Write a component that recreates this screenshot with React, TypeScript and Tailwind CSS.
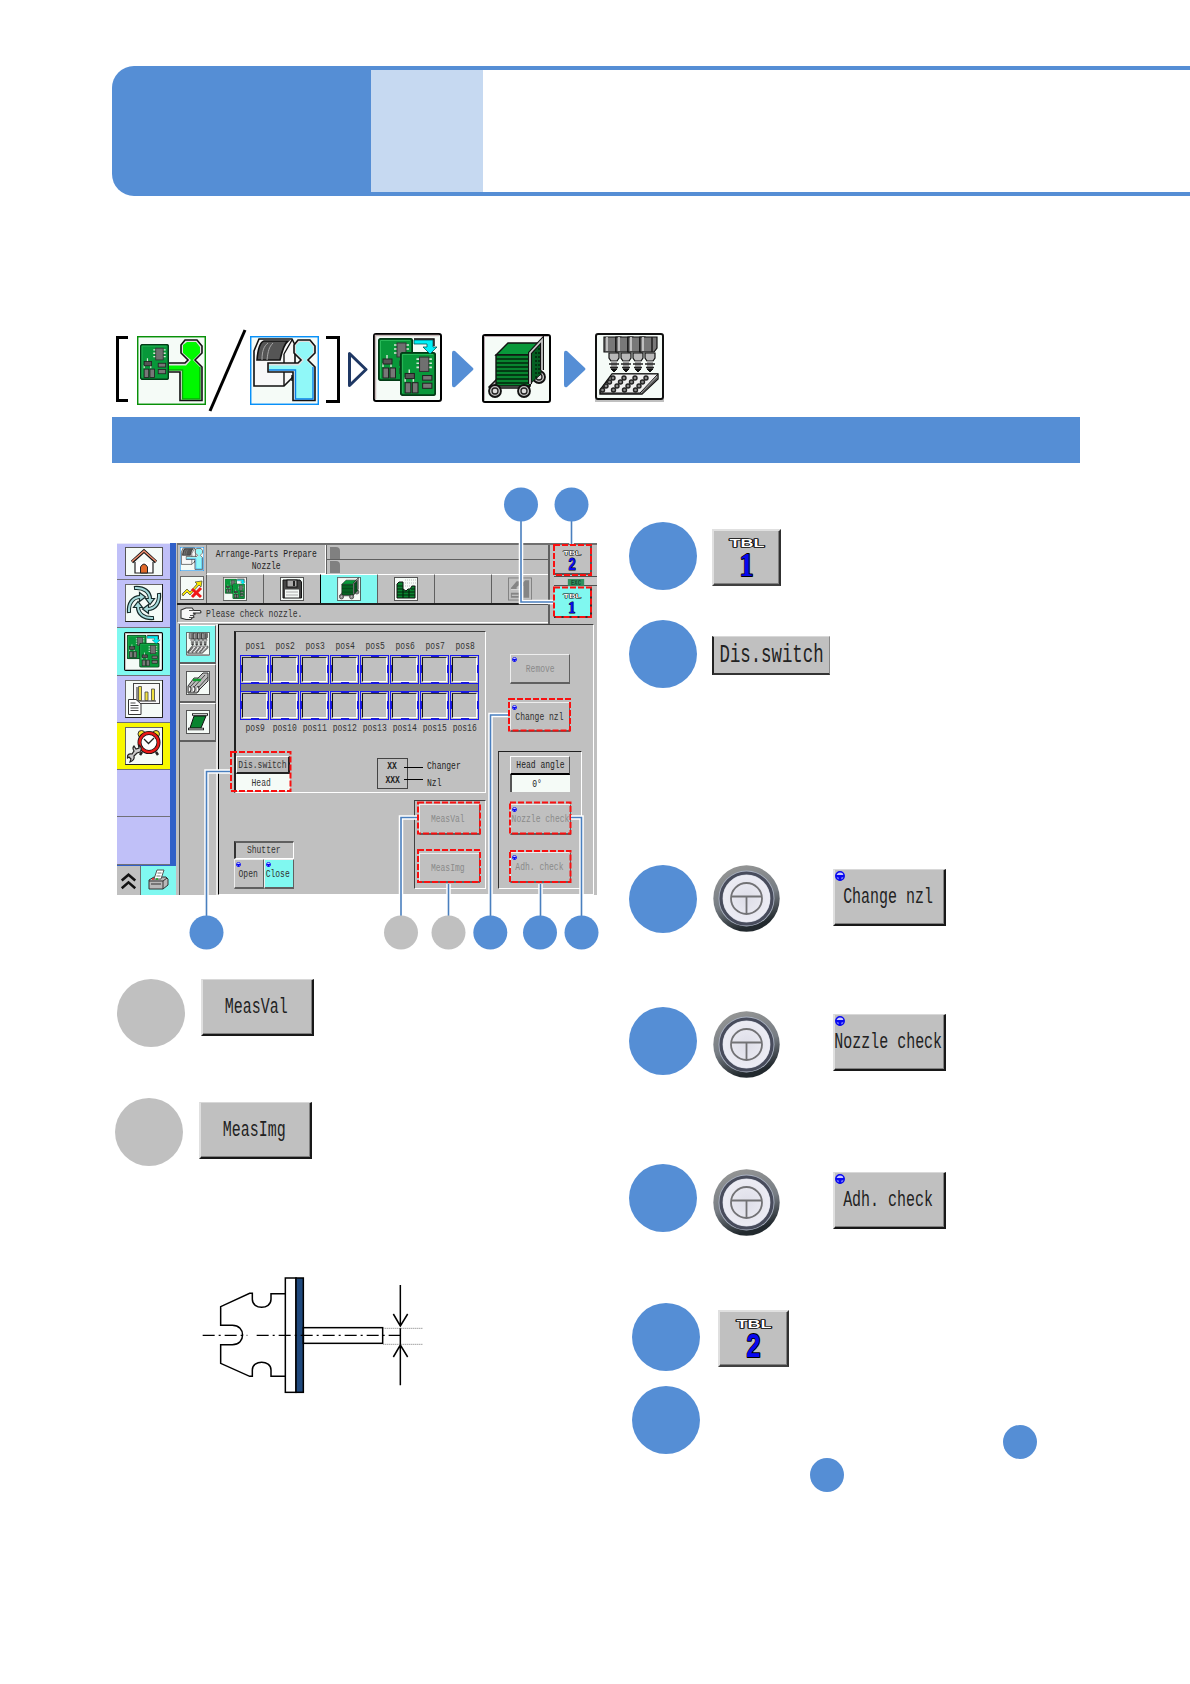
import React from "react";
import clsx from "clsx";

type IconProps = {
  className?: string;
};

/* ---------- text in the machine's narrow terminal face ---------- */

type TermProps = {
  children: React.ReactNode;
  className?: string;
};

const Term = ({ children, className }: TermProps) => (
  <span
    className={clsx(
      "inline-block translate-y-px scale-x-[0.68] whitespace-pre font-['Liberation_Mono',monospace] leading-none",
      className,
    )}
  >
    {children}
  </span>
);

/* ---------- icons ---------- */

const Board = ({ x, y, w = 35, h = 43 }: { x: number; y: number; w?: number; h?: number }) => (
  <svg x={x} y={y} width={w} height={h} viewBox="0 0 35 43" preserveAspectRatio="none">
    <rect x="0.8" y="0.8" width="33.4" height="41.4" rx="2" fill="#08983a" stroke="#033b16" strokeWidth="1.8" />
    <path d="M2.5 40V2.5H32" fill="none" stroke="#28b858" />
    <path d="M16 7h15M16 11h15M16 15h15" stroke="#d8e8d8" strokeWidth="1.6" />
    <rect x="19" y="5" width="9" height="14" fill="#707070" stroke="#333" />
    <path d="M9 17v6M5 25v4M13 25v4" stroke="#d8e8d8" strokeWidth="1.4" />
    <rect x="5" y="21" width="9" height="5" fill="#555" stroke="#222" />
    <rect x="5" y="30" width="5.5" height="10" fill="#777" stroke="#222" />
    <rect x="12" y="30" width="5.5" height="10" fill="#777" stroke="#222" />
    <rect x="22" y="23" width="9" height="4.5" fill="#777" stroke="#222" />
    <rect x="22" y="30.5" width="9" height="5" fill="#777" stroke="#222" />
  </svg>
);

const Person = ({ fill, shade, arm }: { fill: string; shade: string; arm: number }) => (
  <g>
    <path
      d={`M48 4H60L65 10V17L58 24L65 31V64.5H43V36H${arm}V27H48L51 24L44 17V9Z`}
      fill="#e0e0e0"
      stroke="#111"
      strokeWidth="1.6"
    />
    <path
      d={`M50 6H59L63 11V17L56 24L63 31V63H45.5V34H${arm + 1}V29.5H49L54 24L46 17V9Z`}
      fill={fill}
    />
    <path d={`M${arm + 1} 34H45.5V63H63V31`} fill="none" stroke={shade} strokeWidth="1.4" />
  </g>
);

const OperatorBoardIcon = ({ className }: IconProps) => (
  <svg className={className} viewBox="0 0 69 69">
    <rect x="0.7" y="0.7" width="67.6" height="67.6" fill="#f5fbf7" stroke="#089008" strokeWidth="1.5" />
    <Person fill="#00f800" shade="#08a808" arm={31} />
    <Board x={3} y={8} w={29} h={36} />
  </svg>
);

const OperatorMachineIcon = ({ className }: IconProps) => (
  <svg className={className} viewBox="0 0 69 69">
    <rect x="0.7" y="0.7" width="67.6" height="67.6" fill="#f5fbf7" stroke="#0890f8" strokeWidth="1.5" />
    <path d="M4 15 9 3H42L45 9V39L34 50H4Z" fill="#f8f8f8" stroke="#111" strokeWidth="1.6" />
    <path d="M34 50V18M34 18 42 4M42 45V39" fill="none" stroke="#111" strokeWidth="1.4" />
    <path d="M7 24C8 12 10 6 14 5H38C34 8 32 15 30 24Z" fill="#555" stroke="#111" strokeWidth="1.6" />
    <path d="M12 24C12 15 14 10 18 7M17 24C18 15 19 11 23 7" fill="none" stroke="#aaa" />
    <Person fill="#90f8f8" shade="#0880e8" arm={18} />
  </svg>
);

const BoardsIcon = ({ className }: IconProps) => (
  <svg className={className} viewBox="0 0 69 69">
    <rect x="1" y="1" width="67" height="67" rx="2" fill="#f5fbf7" stroke="#000" strokeWidth="2" />
    <path d="M2.5 66V2.5H66" fill="none" stroke="#c8b8b8" strokeWidth="1.5" />
    <Board x={5} y={5} />
    <Board x={27} y={19} w={36} h={44} />
    <path d="M41 7H60V14H64L57 21L50 14H54V11H41Z" fill="#00f0f8" stroke="#055" strokeWidth="0.8" />
    <path d="M41 6H61V13" fill="none" stroke="#000" strokeWidth="1.4" />
  </svg>
);

const Wheel = ({ x, y }: { x: number; y: number }) => (
  <g>
    <circle cx={x} cy={y} r="6" fill="#c0c0c0" stroke="#111" strokeWidth="1.8" />
    <circle cx={x} cy={y} r="3" fill="#ddd" stroke="#222" strokeWidth="1.3" />
  </g>
);

const CartIcon = ({ className }: IconProps) => (
  <svg className={className} viewBox="0 0 69 69">
    <rect x="1" y="1" width="67" height="67" rx="2" fill="#f5fbf7" stroke="#000" strokeWidth="2" />
    <path d="M2.5 66V2.5H66" fill="none" stroke="#b8a8b0" />
    <Wheel x={57} y={43} />
    <path d="M7 53 14 46H50L47 54H8Z" fill="#c0c0c0" stroke="#111" strokeWidth="1.5" />
    <path d="M14 21 26 9H59L47 21Z" fill="#08983a" stroke="#111" strokeWidth="1.4" />
    <path d="M47 21 59 9V40L47 51Z" fill="#045f22" stroke="#111" />
    <rect x="14" y="21" width="34" height="31" fill="#08842f" stroke="#111" strokeWidth="1.4" />
    <path d="M14 25H48M14 29H48M14 33H48M14 37H48M14 41H48M14 45H48M14 49H48" stroke="#02250c" strokeWidth="1.7" />
    <path d="M54 18V46M57 14V42" stroke="#02250c" strokeWidth="1.5" strokeDasharray="2 2" />
    <path d="M48 50V19L60 6V36" fill="none" stroke="#111" strokeWidth="4" />
    <path d="M48 50V19L60 6V36" fill="none" stroke="#c8c8c8" strokeWidth="1.8" />
    <Wheel x={13} y={57} />
    <Wheel x={42} y={57} />
  </svg>
);

const NozzleTrayIcon = ({ className }: IconProps) => (
  <svg className={className} viewBox="0 0 69 69">
    <rect x="0" y="66" width="69" height="3" fill="#c0c0c0" />
    <rect x="1" y="1" width="67" height="65" rx="2" fill="#f5fbf7" stroke="#111" strokeWidth="2" />
    {[9, 21, 33, 45].map((x) => (
      <g key={x}>
        <path d={`M${x} 4V19H${x + 14}L${x + 17} 15V4Z`} fill="#787878" stroke="#111" strokeWidth="1.2" />
        <path d={`M${x + 3} 4V18`} stroke="#c8c8c8" strokeWidth="1.8" />
        <path d={`M${x + 12} 4V19`} stroke="#222" strokeWidth="1.6" />
        <path
          d={`M${x + 5} 20H${x + 15}V25L${x + 13} 28H${x + 7}L${x + 5} 25Z`}
          fill="#b8b8b8"
          stroke="#111"
          strokeWidth="1.2"
        />
        <path d={`M${x + 7} 28H${x + 13}V36H${x + 7}Z`} fill="#a0a0a0" />
        <path d={`M${x + 5} 31H${x + 15}M${x + 6} 34.5H${x + 14}`} stroke="#222" strokeWidth="1.6" />
        <path d={`M${x + 7} 36H${x + 13}L${x + 10} 39Z`} fill="#111" stroke="#111" />
      </g>
    ))}
    <path d="M17 41H63V46L47 61H5V57Z" fill="#b8b8b8" stroke="#111" strokeWidth="1.4" />
    <path d="M17 41H63L45 60H5Z" fill="#f0f0f0" stroke="#111" />
    <path d="M47 60 63 44" stroke="#555" strokeWidth="1.5" />
    {[0, 1, 2, 3].map((row) =>
      [0, 1, 2, 3].map((col) => (
        <circle
          key={`${row}-${col}`}
          cx={18 - row * 3.5 + col * 11}
          cy={45 + row * 4}
          r="2"
          fill="#888"
          stroke="#222"
          strokeWidth="1.4"
        />
      )),
    )}
  </svg>
);

const Frame = ({ children }: { children?: React.ReactNode }) => (
  <>
    <rect x="0.5" y="0.5" width="37" height="37" fill="#f5fbf7" stroke="#666" />
    <path d="M0.5 38V37.5H37.5V0" fill="none" stroke="#222" />
    {children}
  </>
);

const HomeIcon = ({ className }: IconProps) => (
  <svg className={className} viewBox="0 0 38 29">
    <rect x="0.5" y="0.5" width="37" height="28" fill="#f5fbf7" stroke="#555" />
    <path d="M10 15V26H28V15" fill="#fff" stroke="#222" strokeWidth="1.2" />
    <path d="M7 15 19 4 31 15" fill="none" stroke="#111" strokeWidth="3.2" />
    <path d="M7 14.5 19 4 31 14.5" fill="none" stroke="#f09070" strokeWidth="1.4" />
    <path d="M15.5 26V20Q19 14 22.5 20V26Z" fill="#e06828" stroke="#222" />
  </svg>
);

const CycleIcon = ({ className }: IconProps) => (
  <svg className={className} viewBox="0 0 38 38">
    <Frame>
      {[0, 90, 180, 270].map((angle) => (
        <g key={angle} transform={`rotate(${angle} 19 19)`}>
          <path d="M9 4C19 3 25 8 25 15" fill="none" stroke="#152a2a" strokeWidth="4.2" />
          <path d="M20.5 14.5H29.5L25 20.5Z" fill="#a8dcdc" stroke="#152a2a" strokeWidth="1.2" />
          <path d="M10 4C19 3.500 25 8 25 16" fill="none" stroke="#a8dcdc" strokeWidth="2" />
        </g>
      ))}
    </Frame>
  </svg>
);

const ReportIcon = ({ className }: IconProps) => (
  <svg className={className} viewBox="0 0 38 38">
    <Frame>
      <rect x="8.5" y="3.5" width="26" height="20" fill="#f8f8f8" stroke="#444" />
      <path d="M12 7V21H31" fill="none" stroke="#222" />
      <path d="M13.5 6.500h3v14h-3zM20 12h3v8.5h-3zM26.5 9h3v11.5h-3z" fill="#f0e040" stroke="#444" strokeWidth="0.8" />
      <path d="M3.5 19.5H11L16 24V34.5H3.5Z" fill="#fff" stroke="#333" />
      <path d="M5.5 23h5M5.5 25.5h8M5.5 28h8M5.5 30.5h8" stroke="#333" strokeWidth="0.9" />
    </Frame>
  </svg>
);

const AlarmIcon = ({ className }: IconProps) => (
  <svg className={className} viewBox="0 0 38 38">
    <Frame>
      <path d="M17 25 15 28M31 25 33 28" stroke="#222" strokeWidth="2.5" />
      <circle cx="16.5" cy="7" r="3.5" fill="#f8e020" stroke="#333" />
      <circle cx="31" cy="7" r="3.5" fill="#f8e020" stroke="#333" />
      <circle cx="24" cy="15.5" r="9.5" fill="#fff" stroke="#111" strokeWidth="4" />
      <circle cx="24" cy="15.5" r="9.5" fill="none" stroke="#e81818" strokeWidth="2.4" />
      <path d="M19 12 23.5 16.5 29 11" fill="none" stroke="#222" strokeWidth="1.3" />
      <path
        d="M9 19 11 22 14 21 14 18Q18 21 15 25L12 26 9 29Q10 33 5 35L6 32 4 30 2.5 31Q2 26 7 27L9 24Q7 21 9 19Z"
        fill="#ccc"
        stroke="#222"
        strokeWidth="1.2"
      />
    </Frame>
  </svg>
);

const ChevronsIcon = ({ className }: IconProps) => (
  <svg className={className} viewBox="0 0 18 20" fill="none" stroke="#111" strokeWidth="2.8">
    <path d="M1.5 9.5 9 3 16.5 9.5M1.5 18 9 11.5 16.5 18" />
  </svg>
);

const PrinterIcon = ({ className }: IconProps) => (
  <svg className={className} viewBox="0 0 22 22">
    <path d="M2 11 7 8H19L21 10V16L16 20H2Z" fill="#b8b8b8" stroke="#333" />
    <path d="M2 12H16L20 9M16 12V20M4 15H14" fill="none" stroke="#333" />
    <path d="M7 10 10 1H17L14 10Z" fill="#fff" stroke="#555" />
    <path d="M10.5 4H14.5M9.5 7H13.5" stroke="#777" />
    <path d="M5 10H7" stroke="#e02020" strokeWidth="1.5" />
    <path d="M9 10H11" stroke="#10b020" strokeWidth="1.5" />
  </svg>
);

const TrendErrorIcon = ({ className }: IconProps) => (
  <svg className={className} viewBox="0 0 24 24">
    <rect x="0.5" y="0.5" width="23" height="23" fill="#f5fbf7" stroke="#666" />
    <path d="M2 18 7 13 10 16 17 8 15 6 22 5 21 11 19 9 10 19 7 16 3 20Z" fill="#f8e800" stroke="#554" strokeWidth="0.8" />
    <path d="M12 13 21 21M21 12 12 21" stroke="#f01818" strokeWidth="3" />
  </svg>
);

const FloppyIcon = ({ className }: IconProps) => (
  <svg className={className} viewBox="0 0 24 24">
    <rect x="0.5" y="0.5" width="23" height="23" fill="#f5fbf7" stroke="#555" />
    <path d="M3 3H20L21.5 5V21H3Z" fill="#444" stroke="#111" />
    <rect x="7" y="3" width="10" height="7" fill="#aaa" stroke="#111" />
    <path d="M14 4V9" stroke="#222" strokeWidth="2" />
    <rect x="5" y="12.5" width="14" height="8" fill="#f5fbf7" />
    <path d="M6 15H18M6 18H18" stroke="#aaa" />
  </svg>
);

const StacksIcon = ({ className }: IconProps) => (
  <svg className={className} viewBox="0 0 24 24">
    <rect x="0.5" y="0.5" width="23" height="23" fill="#f5fbf7" stroke="#555" />
    <path d="M11 3H22M11 6H22M11 9H22" stroke="#bbb" strokeDasharray="1 1" />
    <path d="M3 7 5 5H9V12L12 14 14 12H16L18 9H21V21H3Z" fill="#08842f" stroke="#111" />
    <path d="M3 9H9M3 12H9M3 15H21M3 18H21M17 12H21M9 12V21M15 13V21" stroke="#02250c" strokeWidth="1.2" />
  </svg>
);

const DisabledStepIcon = ({ className }: IconProps) => (
  <svg className={className} viewBox="0 0 25 24">
    <rect x="0.5" y="0.5" width="24" height="23" fill="none" stroke="#808080" />
    <path d="M3 11 9 4H13V7L9 10V13H3ZM3 16H12V21H3ZM15 6 18 3H22V21H16V9H14Z" fill="#858585" />
    <path d="M3 12.5H13M4 18.5H11" stroke="#d8d8d8" />
  </svg>
);

const HandIcon = ({ className }: IconProps) => (
  <svg className={className} viewBox="0 0 22 14">
    <path
      d="M1 3 6 1H12L14 3.5H20Q22 5 20 6H13L15 7 13 8.5 14 10 12 11 11 12.5H6L1 11Z"
      fill="#f8f8f8"
      stroke="#333"
      strokeWidth="1.1"
    />
    <path d="M9 3.5H14M10 8.5H13M9 10.5H12" stroke="#555" />
  </svg>
);

const FeederIcon = ({ className }: IconProps) => (
  <svg className={className} viewBox="0 0 24 24">
    <rect x="0.5" y="0.5" width="23" height="23" fill="#f5fbf7" stroke="#555" />
    <path d="M2 15 8 7H12L17 2H22V10L13 19 11 22H2Z" fill="#bbb" stroke="#333" />
    <path d="M5 15 15 4M9 15 19 4M12 17 22 6" stroke="#444" />
    <path d="M7 9H15" stroke="#10a030" strokeWidth="2.4" />
    <path d="M3 16Q5 14 5 18T3 21M7 16Q9 14 9 18T7 21M11 16Q13 14 13 18T11 21" fill="#fff" stroke="#222" />
  </svg>
);

const SheetRollIcon = ({ className }: IconProps) => (
  <svg className={className} viewBox="0 0 24 24">
    <rect x="0.5" y="0.5" width="23" height="23" fill="#f5fbf7" stroke="#555" />
    <path d="M8 6H20L15 18H4Z" fill="#08842f" stroke="#111" />
    <path d="M6 4.5H22M2 19H18" stroke="#222" strokeWidth="2.4" />
    <path d="M7 4.5H21M3 19H17" stroke="#ddd" strokeWidth="0.9" />
  </svg>
);

// small steering-wheel mark in the corner of two-hand buttons
const WheelMark = ({ className }: IconProps) => (
  <svg className={className} viewBox="0 0 10 10">
    <circle cx="5" cy="5" r="4.2" fill="#c8c8ff" stroke="#0808f0" strokeWidth="1.5" />
    <path d="M0.5 4H9.5L8.5 6.5H6.5V9.5H3.5V6.5H1.5Z" fill="#0808f0" />
  </svg>
);

const KnobIcon = ({ className }: IconProps) => (
  <svg className={className} viewBox="0 0 67 67">
    <defs>
      <linearGradient id="rim" x1="0" y1="0" x2="0.3" y2="1">
        <stop offset="0" stopColor="#9a9a98" />
        <stop offset="0.6" stopColor="#777d84" />
        <stop offset="1" stopColor="#22292e" />
      </linearGradient>
      <radialGradient id="face">
        <stop offset="0" stopColor="#dedee8" />
        <stop offset="1" stopColor="#ececf4" />
      </radialGradient>
    </defs>
    <circle cx="33.5" cy="33.5" r="33.2" fill="url(#rim)" />
    <circle cx="33.5" cy="33.5" r="28" fill="#aab2c2" />
    <circle cx="33.5" cy="33.5" r="25.500" fill="#d0d4e0" stroke="#484c5c" strokeWidth="3.2" />
    <circle cx="33.5" cy="33.5" r="23.5" fill="url(#face)" />
    <g fill="none" stroke="#727275" strokeWidth="1.8">
      <circle cx="33.5" cy="33.5" r="15.5" />
      <path d="M18 31.5H49M33.5 31.5V49" />
    </g>
  </svg>
);

const TblFace = ({ num, className }: { num: 1 | 2; className?: string }) => (
  <svg className={className} viewBox="0 0 69 58">
    <g stroke="#000" paintOrder="stroke" textAnchor="middle" strokeLinejoin="round">
      <text
        x="35"
        y="18.5"
        fontFamily="Liberation Sans, sans-serif"
        fontWeight="700"
        fontSize="11.5"
        textLength="35"
        lengthAdjust="spacingAndGlyphs"
        fill="#fff"
        strokeWidth="1.6"
      >
        TBL
      </text>
      <text
        x="34.5"
        y="47.5"
        fontFamily={num === 1 ? "Liberation Serif, serif" : "Liberation Sans, sans-serif"}
        fontWeight="700"
        fontSize="33"
        textLength="14"
        lengthAdjust="spacingAndGlyphs"
        fill="#0808f0"
        strokeWidth="2"
      >
        {num}
      </text>
    </g>
  </svg>
);

/* ---------- machine screen ---------- */

type ScreenButtonProps = {
  label: string;
  mark?: boolean;
  muted?: boolean;
  className?: string;
};

const ScreenButton = ({ label, mark, muted, className }: ScreenButtonProps) => (
  <div
    className={clsx(
      "relative flex items-center justify-center border-t border-l border-r border-b-2 border-t-[#eeeeee] border-l-[#eeeeee] border-r-[#606060] border-b-[#606060]",
      className,
    )}
  >
    {mark && <WheelMark className="absolute top-0.5 left-px size-[5px]" />}
    <Term className={clsx("text-[11.8px]", muted ? "text-[#8a8a8a]" : "text-[#303030]")}>{label}</Term>
  </div>
);

const sideItems = [
  { id: "home", h: "h-[36px]", bg: "bg-[#c0c0f8]", icon: <HomeIcon className="h-[29px] w-[38px]" /> },
  { id: "cycle", h: "h-[47.5px]", bg: "bg-[#c0c0f8]", icon: <CycleIcon className="size-[38px]" /> },
  { id: "boards", h: "h-[48px]", bg: "bg-[#80f8f0]", icon: <BoardsIcon className="size-[39px]" /> },
  { id: "report", h: "h-[47px]", bg: "bg-[#c0c0f8]", icon: <ReportIcon className="size-[38px]" /> },
  { id: "alarm", h: "h-[47px]", bg: "bg-[#f8f800]", icon: <AlarmIcon className="size-[38px]" /> },
  { id: "empty-1", h: "h-[47.5px]", bg: "bg-[#c0c0f8]", icon: null },
  { id: "empty-2", h: "h-[47.5px]", bg: "bg-[#c0c0f8]", icon: null },
];

const Sidebar = () => (
  <div className="flex w-[60px] flex-col">
    <div className="flex">
      <div className="w-[53px] border-t border-[#e8e8f8]">
        {sideItems.map((item) => (
          <div
            key={item.id}
            className={clsx(
              "flex items-center justify-center border-b-[1.5px] border-[#707078]",
              item.h,
              item.bg,
            )}
          >
            {item.icon}
          </div>
        ))}
      </div>
      <div className="w-[6px] bg-[#3060c8]" />
      <div className="w-px bg-[#c0c0c0]" />
    </div>
    <div className="h-[1.5px] w-[59px] bg-[#3060c8]" />
    <div className="flex flex-1">
      <div className="flex w-[23px] items-center justify-center bg-[#c0c0c0] pr-px">
        <ChevronsIcon className="h-[18px] w-[17px]" />
      </div>
      <div className="flex w-[36px] items-center justify-center border-l border-[#707070] bg-[#80f8f0] pr-px pb-px">
        <PrinterIcon className="size-[22px]" />
      </div>
    </div>
  </div>
);

const tabs = [
  { id: "boards", icon: <BoardsIcon className="size-6" /> },
  { id: "save", icon: <FloppyIcon className="size-6" /> },
  { id: "cart", icon: <CartIcon className="size-6" />, active: true },
  { id: "stacks", icon: <StacksIcon className="size-6" /> },
  { id: "none", icon: null },
  { id: "step", icon: <DisabledStepIcon className="size-6" /> },
];

const ScreenHeader = () => (
  <div className="flex h-[81px] border-t-2 border-[#707070]">
    <div className="w-[371px]">
      <div className="flex h-[28.5px]">
        <div className="flex w-[30px] items-center justify-center border-x border-[#808080]">
          <OperatorMachineIcon className="size-6" />
        </div>
        <div className="flex w-[119px] flex-col items-center justify-center border-r border-b border-white pt-[2px]">
          <Term className="text-[11.8px] leading-[9.5px] text-[#222]">Arrange-Parts Prepare</Term>
          <Term className="text-[11.8px] leading-[9.5px] text-[#222]">Nozzle</Term>
        </div>
        <div className="flex-1 border-l border-[#606060]">
          <div className="flex h-[15px] items-end border-b border-[#606060] pl-[3px]">
            <div className="h-[12px] w-[10px] rounded-tr-[4px] bg-[#808080]" />
          </div>
          <div className="flex h-[13px] items-end pl-[3px]">
            <div className="h-[12px] w-[10px] rounded-tr-[4px] bg-[#808080]" />
          </div>
        </div>
      </div>
      <div className="flex h-[31.5px] border-b-2 border-[#202020]">
        <div className="flex w-[29px] items-center justify-center border-l border-[#808080]">
          <TrendErrorIcon className="size-6" />
        </div>
        {tabs.map((tab) => (
          <div
            key={tab.id}
            className={clsx(
              "flex flex-1 items-center justify-center border-t border-l border-t-white",
              tab.active ? "border-l-black bg-[#80f8f0]" : "border-l-[#606060]",
            )}
          >
            {tab.icon}
          </div>
        ))}
      </div>
      <div className="flex h-[18px] items-center border-b border-l border-b-white border-l-[#808080] pl-[2px]">
        <HandIcon className="h-[14px] w-[22px]" />
        <Term className="ml-[4px] origin-left text-[11.8px] text-[#333]">Please check nozzle.</Term>
      </div>
    </div>
    <div className="flex flex-1 flex-col border-l-2 border-[#606060] pl-[4px]">
      <div className="flex h-[30px] w-[38px] items-center justify-center border-r-2 border-b-2 border-[#555] pt-[2px]">
        <TblFace num={2} className="h-[30px] w-[36px] shrink-0" />
      </div>
      <div className="flex h-[12px] flex-col items-center justify-center">
        <div className="flex h-[10px] w-full items-center justify-center border-y border-[#505050] bg-[#c8c8c8]">
          <Term className="h-[7px] w-[24px] bg-[#309060] text-center text-[8px] font-bold text-[#174b31]">EXC</Term>
        </div>
      </div>
      <div className="flex h-[31px] w-[38px] items-center justify-center border-r-2 border-b-2 border-[#303030] bg-[#80f8f0] pt-[2px]">
        <TblFace num={1} className="h-[30px] w-[36px] shrink-0" />
      </div>
    </div>
  </div>
);

const sideTabs = [
  { id: "nozzle", icon: <NozzleTrayIcon className="size-6" />, active: true },
  { id: "feeder", icon: <FeederIcon className="size-6" /> },
  { id: "sheet", icon: <SheetRollIcon className="size-6" /> },
];

const NozzleSlot = () => (
  <div className="flex w-[30px]">
    <div className="relative h-[29px] w-[29px] border border-[#1818f0] p-px">
      <div className="h-full w-full border border-t-[#303030] border-r-white border-b-white border-l-[#101010]" />
      <div className="absolute top-0 left-[10px] h-px w-2 bg-[#1818d0]" />
      <div className="absolute bottom-0 left-[10px] h-px w-2 bg-[#1818d0]" />
      <div className="absolute top-[9px] left-0 h-2 w-px bg-[#1818d0]" />
      <div className="absolute top-[9px] right-0 h-2 w-px bg-[#1818d0]" />
    </div>
  </div>
);

const PosLabels = ({ from }: { from: number }) => (
  <div className="flex h-[16px] w-[240px] items-center">
    {Array.from({ length: 8 }, (_, i) => (
      <div key={i} className="flex w-[30px] justify-center">
        <Term className="text-[11.8px] text-[#333]">{`pos${from + i}`}</Term>
      </div>
    ))}
  </div>
);

const NozzleGroup = () => (
  <div className="flex h-[162px] w-[252px] flex-col border-t border-l-2 border-r border-b border-t-[#404040] border-r-white border-b-white border-l-[#202020] pl-[4px]">
    <div className="mt-[6px]">
      <PosLabels from={1} />
    </div>
    <div className="mt-px flex w-[240px]">
      {Array.from({ length: 8 }, (_, i) => (
        <NozzleSlot key={i} />
      ))}
    </div>
    <div className="h-[7px] w-[239px] border-x border-[#1818f0] bg-[#808080]" />
    <div className="flex w-[240px]">
      {Array.from({ length: 8 }, (_, i) => (
        <NozzleSlot key={i} />
      ))}
    </div>
    <PosLabels from={9} />
    <div className="mt-[20px] flex">
      <div className="-ml-[4px] w-[54px]">
        <div className="flex h-[18px] items-center justify-center border-t border-l border-r-2 border-b-2 border-t-white border-r-[#222] border-b-[#222] border-l-white bg-[#b8b8b8]">
          <Term className="text-[11.8px] text-[#333]">Dis.switch</Term>
        </div>
        <div className="flex h-[17px] items-center justify-center bg-[#f5fbf7] pr-[3px]">
          <Term className="text-[11.8px] text-[#333]">Head</Term>
        </div>
      </div>
      <div className="mt-[1.5px] ml-[87px] flex h-[31px] w-[31px] flex-col items-center justify-center gap-0.5 border border-[#444]">
        <Term className="text-[11.8px] leading-[10px] font-bold text-[#222]">XX</Term>
        <Term className="text-[11.8px] leading-[10px] font-bold text-[#222]">XXX</Term>
      </div>
      <div className="-ml-[4px] flex w-[19px] flex-col pt-[11px]">
        <div className="h-px bg-black" />
        <div className="mt-[11px] h-px bg-black" />
      </div>
      <div className="flex flex-col pl-[4px]">
        <Term className="mt-[4px] origin-left text-[11.8px] text-[#222]">Changer</Term>
        <Term className="mt-[5px] origin-left text-[11.8px] text-[#222]">Nzl</Term>
      </div>
    </div>
  </div>
);

const MachineScreen = () => (
  <div className="flex h-[352px] w-[480px] overflow-hidden bg-[#c0c0c0]">
    <Sidebar />
    <div className="flex flex-1 flex-col">
      <ScreenHeader />
      <div className="flex flex-1">
        <div className="w-[41px] border-r-2 border-[#e8e8e8] pl-0.5">
          <div className="h-full border-l border-[#555] pt-px">
            {sideTabs.map((tab) => (
              <div
                key={tab.id}
                className={clsx(
                  "flex h-[39px] w-[36px] items-center justify-center border-t border-r border-b-2 border-t-white border-r-[#606060] border-b-[#606060]",
                  tab.active && "bg-[#80f8f0]",
                )}
              >
                {tab.icon}
              </div>
            ))}
          </div>
        </div>
        <div className="mr-[3px] flex flex-1 border-t border-r border-b border-l border-t-[#404040] border-r-white border-b-white border-l-black">
          <div className="w-[267px] pt-[6px] pl-[15px]">
            <NozzleGroup />
            <div className="flex pt-[7px]">
              <div className="mt-[41px] w-[60px]">
                <div className="flex h-[18px] items-center justify-center border-t-2 border-r border-b border-l-2 border-t-[#606060] border-r-white border-b-white border-l-[#333] pr-[2px] pb-px">
                  <Term className="text-[11.8px] text-[#333]">Shutter</Term>
                </div>
                <div className="flex">
                  <ScreenButton label="Open" mark className="h-[30px] w-[30px] pr-[2px]" />
                  <ScreenButton label="Close" mark className="h-[30px] w-[30px] bg-[#80f8f0] pr-[2px]" />
                </div>
              </div>
              <div className="ml-[120px] flex h-[89px] w-[72px] flex-col border-t border-r border-b border-l border-t-[#404040] border-r-white border-b-white border-l-[#404040] pl-[4px]">
                <ScreenButton label="MeasVal" muted className="mt-[3px] h-[31px] w-[61px] pr-[3px]" />
                <ScreenButton label="MeasImg" muted className="mt-[18px] h-[30px] w-[61px] pr-[3px]" />
              </div>
            </div>
          </div>
          <div className="pl-[12px]">
            <div className="pt-[29px] pl-[12px]">
              <ScreenButton label="Remove" mark muted className="h-[30px] w-[60px]" />
              <ScreenButton label="Change nzl" mark className="mt-[18px] h-[30px] w-[60px] pr-[2px]" />
            </div>
            <div className="mt-[19px] flex h-[138px] w-[84px] flex-col border-t border-r border-b border-l border-t-[#202020] border-r-white border-b-white border-l-[#303030] pl-[11px]">
              <div className="mt-[4px] flex h-[19px] w-[60px] items-center justify-center border border-b-2 border-t-white border-r-[#555] border-b-black border-l-white">
                <Term className="text-[11.8px] text-[#222]">Head angle</Term>
              </div>
              <div className="flex h-[17px] w-[60px] items-center justify-center border-l-2 border-[#555] bg-[#f5fbf7] pr-[8px]">
                <Term className="text-[11.8px] text-[#222]">0°</Term>
              </div>
              <ScreenButton label="Nozzle check" mark muted className="mt-[12px] h-[31px] w-[61px]" />
              <ScreenButton label="Adh. check" mark muted className="mt-[17px] h-[31px] w-[61px] pr-[2px]" />
            </div>
          </div>
        </div>
      </div>
    </div>
  </div>
);

/* ---------- callouts drawn over the screen ---------- */

const highlights = [
  { x: 437, y: 2, w: 37, h: 30 },
  { x: 437, y: 44.5, w: 37, h: 29.5 },
  { x: 114, y: 209, w: 59.5, h: 39 },
  { x: 392, y: 156, w: 61, h: 31.5 },
  { x: 301, y: 259.5, w: 62, h: 31 },
  { x: 301, y: 307, w: 62, h: 32 },
  { x: 393, y: 259.5, w: 60.5, h: 31 },
  { x: 393, y: 308, w: 60.5, h: 31 },
];

const leaders = [
  "M404 -22V59H436",
  "M454.5 -22V1",
  "M89.5 373V228.5H113",
  "M284 373V274.5H300",
  "M331.5 373V341",
  "M373.5 373V172H391",
  "M423.5 373V341",
  "M464.5 373V274.5H454",
];

const dots = [
  { x: 404, y: -38.5 },
  { x: 454.5, y: -38.5 },
  { x: 89.5, y: 389.5 },
  { x: 284, y: 389.5, gray: true },
  { x: 331.5, y: 389.5, gray: true },
  { x: 373.3, y: 389.5 },
  { x: 423, y: 389.5 },
  { x: 464.5, y: 389.5 },
];

const Callouts = () => (
  <svg className="absolute inset-0 h-[352px] w-[480px] overflow-visible" viewBox="0 0 480 352" fill="none">
    {highlights.map((box) => (
      <rect
        key={`${box.x}-${box.y}`}
        x={box.x}
        y={box.y}
        width={box.w}
        height={box.h}
        stroke="#f81010"
        strokeWidth="2"
        strokeDasharray="6 2"
      />
    ))}
    {leaders.map((d) => (
      <g key={d}>
        <path d={d} stroke="#fff" strokeWidth="4.5" />
        <path d={d} stroke="#4a7fbe" strokeWidth="1.6" />
      </g>
    ))}
    {dots.map((dot) => (
      <circle key={`${dot.x}-${dot.y}`} cx={dot.x} cy={dot.y} r="17" fill={dot.gray ? "#c0c0c0" : "#558ed5"} />
    ))}
  </svg>
);

/* ---------- page parts ---------- */

const Step = ({ gray }: { gray?: boolean }) => (
  <div className={clsx("size-[68px] shrink-0 rounded-full", gray ? "bg-[#c0c0c0]" : "bg-[#558ed5]")} />
);

type KeyButtonProps = {
  label: string;
  mark?: boolean;
  className?: string;
};

const KeyButton = ({ label, mark, className }: KeyButtonProps) => (
  <div
    className={clsx(
      "relative flex h-[57px] w-[113px] shrink-0 items-center justify-center border-t border-l-2 border-r-2 border-b-2 border-t-[#d8d8d8] border-r-[#181818] border-b-[#181818] border-l-[#e0e0e0] bg-[#c0c0c0] pr-[2px] shadow-[inset_-1px_-1px_0_#808080]",
      className,
    )}
  >
    {mark && <WheelMark className="absolute top-px left-0 size-[10px]" />}
    <Term className="text-[22px] text-[#222]">{label}</Term>
  </div>
);

const TblButton = ({ num, className }: { num: 1 | 2; className?: string }) => (
  <div
    className={clsx(
      "flex h-[57.5px] shrink-0 items-center justify-center border-t-2 border-l-2 border-r-2 border-b-2 border-t-[#e0e0e0] border-r-[#303030] border-b-[#404040] border-l-[#e0e0e0] bg-[#c0c0c0] shadow-[inset_-1px_-1px_0_#808080]",
      className,
    )}
  >
    <TblFace num={num} className="h-[58px] w-[69px] shrink-0" />
  </div>
);

const PageHeader = () => (
  <header className="mt-[65.5px] ml-[112px] flex h-[130px]">
    <div className="w-[259px] rounded-l-[22px] bg-[#558ed5]" />
    <div className="flex flex-1 border-y-[4px] border-[#558ed5]">
      <div className="w-[112px] bg-[#c6d9f1]" />
    </div>
  </header>
);

const ArrowRight = () => (
  <svg className="h-[38px] w-[22px]" viewBox="0 0 22 38">
    <path d="M0 3Q0 0 3 1L21 18Q22 19 21 20L3 37Q0 38 0 35Z" fill="#558ed5" />
  </svg>
);

const Breadcrumb = () => (
  <nav className="mt-[133.5px] ml-[116px] flex h-[83px] items-start">
    <div className="mt-[7px] h-[66px] w-[12px] border-y-[3px] border-l-[3px] border-black" />
    <OperatorBoardIcon className="mt-[7px] ml-[9px] size-[69px]" />
    <svg className="ml-[2px] h-[83px] w-[39px]" viewBox="0 0 39 83">
      <path d="M2 82 37 1" stroke="#000" strokeWidth="3" />
    </svg>
    <OperatorMachineIcon className="mt-[7px] ml-[3px] size-[69px]" />
    <div className="mt-[7px] ml-[7px] h-[67px] w-[14px] border-y-[3px] border-r-[3px] border-black" />
    <svg className="mt-[22px] ml-[8px] h-[37px] w-[20px]" viewBox="0 0 20 37">
      <path d="M1.5 2.5V34.5L18 18.5Z" fill="#fff" stroke="#1f3864" strokeWidth="3" strokeLinejoin="round" />
    </svg>
    <BoardsIcon className="mt-[4px] ml-[5px] size-[69px]" />
    <div className="mt-[21px] ml-[10px]">
      <ArrowRight />
    </div>
    <CartIcon className="mt-[5px] ml-[8px] size-[69px]" />
    <div className="mt-[21px] ml-[13px]">
      <ArrowRight />
    </div>
    <NozzleTrayIcon className="mt-[4px] ml-[9px] size-[69px]" />
  </nav>
);

// side view of a nozzle with the tip diameter marked
const NozzleDiagram = ({ className }: IconProps) => (
  <svg className={className} viewBox="0 0 750 450" fill="none" stroke="#000" strokeWidth="4.5">
    <path d="M286 101H243V118C243 150 187 150 187 118V100H179L92 140V196H127C168 196 168 254 127 254H92V310L179 349H187V330C187 299 243 299 243 330V349H286" />
    <rect x="286" y="54" width="32" height="343" />
    <rect x="318" y="54" width="22" height="343" fill="#1f497d" />
    <rect x="340" y="203" width="238" height="47" />
    <path d="M38 226H172M200 226H632" strokeWidth="4" strokeDasharray="36 12 6 12" />
    <path d="M580 205H697M580 253H697" stroke="#777" strokeWidth="3" strokeDasharray="3 3" />
    <path d="M631 75V199M610 162 631 198 653 162M631 376V255M610 291 631 255 653 291M631 205V253" />
  </svg>
);

const App = () => (
  <main className="flex h-[1684px] w-[1190px] flex-col overflow-hidden bg-white">
    <PageHeader />
    <Breadcrumb />
    <div className="mt-[5px] ml-[112px] h-[46px] w-[968px] shrink-0 bg-[#558ed5]" />
    <div className="flex">
      <section className="w-[517px] pt-[80px] pl-[112px]">
        <div className="relative ml-[5px] h-[352px] w-[480px]">
          <MachineScreen />
          <Callouts />
        </div>
        <div className="mt-[84px] ml-[5px] flex items-start">
          <Step gray />
          <KeyButton label="MeasVal" className="ml-[15.5px]" />
        </div>
        <div className="mt-[51px] ml-[3px] flex items-start">
          <Step gray />
          <KeyButton label="MeasImg" className="mt-[4px] ml-[16px]" />
        </div>
        <NozzleDiagram className="mt-[94px] ml-[78px] h-[150px] w-[250px]" />
      </section>
      <section className="w-[561px] pt-[59px] pl-[112px]">
        <div className="flex items-start">
          <Step />
          <TblButton num={1} className="mt-[6.5px] ml-[15px] w-[69px]" />
        </div>
        <div className="mt-[30px] flex items-start">
          <Step />
          <div className="mt-[16px] ml-[15px] flex h-[39px] w-[118px] items-center justify-center border-t border-r border-b-2 border-l-2 border-t-[#d8d8d8] border-r-[#888] border-b-[#333] border-l-[#222] bg-[#c0c0c0]">
            <Term className="text-[25.5px] text-[#222]">Dis.switch</Term>
          </div>
        </div>
        <div className="mt-[177px] flex items-start">
          <Step />
          <KnobIcon className="ml-[16px] size-[67px]" />
          <KeyButton label="Change nzl" mark className="mt-[4px] ml-[53px]" />
        </div>
        <div className="mt-[74px] flex items-start">
          <Step />
          <KnobIcon className="mt-[4px] ml-[16px] size-[67px]" />
          <KeyButton label="Nozzle check" mark className="mt-[7px] ml-[53px]" />
        </div>
        <div className="mt-[86px] flex items-start">
          <Step />
          <KnobIcon className="mt-[4.5px] ml-[16px] size-[67px]" />
          <KeyButton label="Adh. check" mark className="mt-[8px] ml-[53px]" />
        </div>
        <div className="mt-[67px] ml-[2.5px] flex items-start">
          <Step />
          <TblButton num={2} className="mt-[7px] ml-[18.5px] w-[71px]" />
        </div>
        <div className="mt-[15px] ml-[2.5px] flex items-start">
          <Step />
          <div className="mt-[72px] ml-[110.5px] size-[34px] rounded-full bg-[#558ed5]" />
          <div className="mt-[39px] ml-[159px] size-[34px] rounded-full bg-[#558ed5]" />
        </div>
      </section>
    </div>
  </main>
);

export default App;
